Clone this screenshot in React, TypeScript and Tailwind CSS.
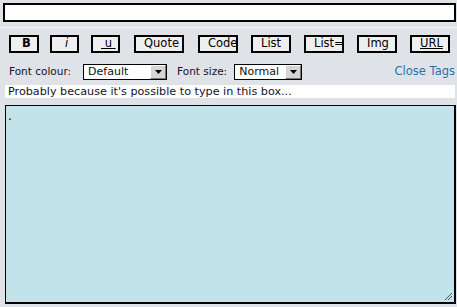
import React from "react";

const BUTTONS = [
  { label: "B", ml: "ml-[9px]", w: "w-[30px]", pl: "pl-[11px]", cls: "font-bold" },
  { label: "i", ml: "ml-[11px]", w: "w-[29px]", pl: "pl-[13px]", cls: "italic" },
  { label: "\u00a0u\u00a0", ml: "ml-[12px]", w: "w-[29px]", pl: "pl-[8px]", cls: "underline" },
  { label: "Quote", ml: "ml-[14px]", w: "w-[50px]", pl: "pl-[8px]", cls: "" },
  { label: "Code", ml: "ml-[14px]", w: "w-[40px]", pl: "pl-[8px]", cls: "" },
  { label: "List", ml: "ml-[13px]", w: "w-[40px]", pl: "pl-[8px]", cls: "" },
  { label: "List=", ml: "ml-[13px]", w: "w-[40px]", pl: "pl-[8px]", cls: "" },
  { label: "Img", ml: "ml-[13px]", w: "w-[40px]", pl: "pl-[8px]", cls: "" },
  { label: "URL", ml: "ml-[13px]", w: "w-[40px]", pl: "pl-[8px]", cls: "underline" },
];

function Select({ value, w }: { value: string; w: string }) {
  return (
    <div className={`${w} h-[16px] flex items-stretch border border-black bg-white`}>
      <div className="flex-1 pl-[4px] leading-[14px] text-[11px] text-[#111]">{value}</div>
      <div className="w-[16px] bg-[#d6d6d6] border-l border-t border-l-white border-t-white border-r border-b border-r-[#777] border-b-[#777] flex items-center justify-center">
        <svg width="7" height="4" viewBox="0 0 7 4">
          <path d="M0 0h7L3.5 4z" fill="#000" />
        </svg>
      </div>
    </div>
  );
}

export default function App() {
  return (
    <div
      className="w-[457px] h-[307px] bg-[#dfe3e7] flex flex-col overflow-hidden text-[10.5px] text-[#141428]"
      style={{ fontFamily: '"DejaVu Sans", Verdana, sans-serif' }}
    >
      <div className="mt-[3px] ml-[3px] w-[453px] h-[19px] border-2 border-black bg-white" />
      <div className="mt-[5px] h-px bg-[#f4f6f8]" />

      <div className="mt-[7px] flex">
        {BUTTONS.map((b) => (
          <div
            key={b.label}
            className={`${b.ml} ${b.w} ${b.pl} h-[18px] border-2 border-black bg-[#efefef] flex items-center overflow-hidden whitespace-nowrap text-[11.5px] text-black`}
          >
            <span className={b.cls}>{b.label}</span>
          </div>
        ))}
      </div>

      <div className="mt-[10px] h-[18px] flex items-center pr-[2px]">
        <span className="ml-[9px] mr-[12px]">Font colour:</span>
        <Select value="Default" w="w-[84px]" />
        <span className="ml-[10px] mr-[7px]">Font size:</span>
        <Select value="Normal" w="w-[68px]" />
        <a className="ml-auto text-[11.5px] text-[#2a70ad]">Close Tags</a>
      </div>

      <div className="mt-[4px] ml-[5px] w-[450px] h-[13px] bg-white pl-[3px] text-[11.2px] leading-[13px] whitespace-nowrap overflow-hidden">
        Probably because it's possible to type in this box...
      </div>

      <div className="relative mt-[7px] ml-[5px] w-[451px] h-[199px] border border-black border-r-2 border-b-2 bg-[#c1e3e9] px-[2px] pt-[1px] text-[12px] text-black">
        .
        <svg className="absolute right-[1px] bottom-[1px]" width="10" height="10" viewBox="0 0 10 10">
          <path d="M9 2L2 9M9 5L5 9" stroke="#555" strokeWidth="1" />
        </svg>
      </div>
    </div>
  );
}
